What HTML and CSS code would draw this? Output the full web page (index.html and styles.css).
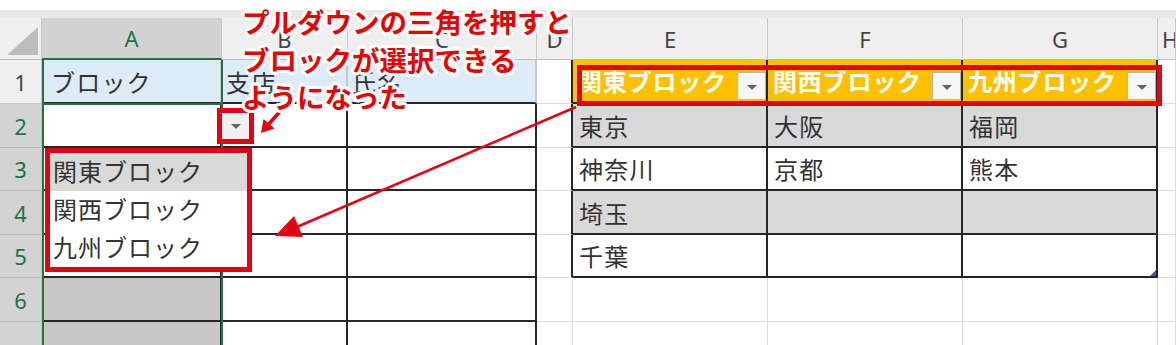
FILE: index.html
```html
<!DOCTYPE html>
<html lang="ja">
<head>
<meta charset="utf-8">
<title>Excel dropdown</title>
<link rel="stylesheet" href="styles.css">
</head>
<body>
<div class="app">
  <div class="topwhite"></div>
  <div class="topstrip"></div>
  <div class="sheet">
    <!-- header row -->
    <div class="corner"><svg width="42" height="42" viewBox="0 0 42 42"><polygon points="7,37 38,9 38,37" fill="#bdbdbd"/></svg></div>
    <div class="ch chsel">A</div>
    <div class="ch">B</div>
    <div class="ch">C</div>
    <div class="ch">D</div>
    <div class="ch">E</div>
    <div class="ch">F</div>
    <div class="ch">G</div>
    <div class="ch chlast">H</div>

    <!-- row 1 -->
    <div class="rh">1</div>
    <div class="c tb blue first">ブロック</div>
    <div class="c tb blue">支店</div>
    <div class="c tb blue">氏名</div>
    <div class="c dl"></div>
    <div class="c tt fh"><span class="fl">関東ブロック</span><span class="fbtn"></span></div>
    <div class="c tt fh"><span class="fl">関西ブロック</span><span class="fbtn"></span></div>
    <div class="c tt fh"><span class="fl">九州ブロック</span><span class="fbtn"></span></div>
    <div class="c"></div>

    <!-- row 2 -->
    <div class="rh rsel">2</div>
    <div class="c tb"></div>
    <div class="c tb"></div>
    <div class="c tb"></div>
    <div class="c dl"></div>
    <div class="c tt gray">東京</div>
    <div class="c tt gray">大阪</div>
    <div class="c tt gray">福岡</div>
    <div class="c"></div>

    <!-- row 3 -->
    <div class="rh rsel">3</div>
    <div class="c tb"></div>
    <div class="c tb"></div>
    <div class="c tb"></div>
    <div class="c dl"></div>
    <div class="c tt">神奈川</div>
    <div class="c tt">京都</div>
    <div class="c tt">熊本</div>
    <div class="c"></div>

    <!-- row 4 -->
    <div class="rh rsel">4</div>
    <div class="c tb"></div>
    <div class="c tb"></div>
    <div class="c tb"></div>
    <div class="c dl"></div>
    <div class="c tt gray">埼玉</div>
    <div class="c tt gray"></div>
    <div class="c tt gray"></div>
    <div class="c"></div>

    <!-- row 5 -->
    <div class="rh rsel">5</div>
    <div class="c tb"></div>
    <div class="c tb"></div>
    <div class="c tb"></div>
    <div class="c dl"></div>
    <div class="c tt">千葉</div>
    <div class="c tt"></div>
    <div class="c tt"><span class="handle"></span></div>
    <div class="c"></div>

    <!-- row 6 -->
    <div class="rh rsel">6</div>
    <div class="c tb selgray"></div>
    <div class="c tb"></div>
    <div class="c tb"></div>
    <div class="c"></div>
    <div class="c"></div>
    <div class="c"></div>
    <div class="c"></div>
    <div class="c"></div>

    <!-- row 7 -->
    <div class="rh rsel">7</div>
    <div class="c tb selgray"></div>
    <div class="c tb"></div>
    <div class="c tb"></div>
    <div class="c"></div>
    <div class="c"></div>
    <div class="c"></div>
    <div class="c"></div>
    <div class="c"></div>
  </div>

  <!-- selection border for column A -->
  <div class="selbox"></div>
  <div class="activeline"></div>

  <!-- dropdown button in A2 -->
  <div class="ddbtn"><span class="tri"></span></div>
  <div class="redbox-btn"></div>

  <!-- dropdown list -->
  <div class="ddlist">
    <div class="item hl">関東ブロック</div>
    <div class="item">関西ブロック</div>
    <div class="item">九州ブロック</div>
  </div>

  <!-- red box around filter headers -->
  <div class="redbox-hdr"></div>

  <!-- arrows -->
  <svg class="arrows" width="1176" height="345" viewBox="0 0 1176 345">
    <line x1="283" y1="108" x2="268" y2="125" stroke="#fff" stroke-width="7" stroke-linecap="round"/>
    <polygon points="261,133 274.5,128.5 263.5,119" fill="#fff" stroke="#fff" stroke-width="4" stroke-linejoin="round"/>
    <line x1="283" y1="108" x2="268" y2="125" stroke="#e60012" stroke-width="3.5" stroke-linecap="round"/>
    <polygon points="261,133 274.5,128.5 263.5,119" fill="#e60012"/>
    <line x1="576" y1="107" x2="298" y2="226.5" stroke="#e60012" stroke-width="2.5"/>
    <polygon points="275,236 303,237 294,216" fill="#e60012"/>
  </svg>

  <!-- annotation -->
  <div class="note">プルダウンの三角を押すと<br>ブロックが選択できる<br>ようになった</div>
</div>
</body>
</html>
```

FILE: styles.css
```css
html, body {
  margin: 0;
  padding: 0;
  background: #ffffff;
}

.app {
  position: relative;
  width: 1176px;
  height: 345px;
  overflow: hidden;
  font-family: "Noto Sans CJK JP", "Noto Sans", sans-serif;
}

.topwhite {
  height: 10px;
  background: #ffffff;
}

.topstrip {
  height: 8px;
  background: #e8e8e8;
}

.sheet {
  display: grid;
  grid-template-columns: 42px 180px 126px 189px 36px 195px 195px 195px 1fr;
  grid-template-rows: 42px 44px 44px 43px 44px 43px 44px 60px;
}

.corner {
  background: #efefef;
  border-right: 1px solid #c8c8c8;
  border-bottom: 1px solid #bdbdbd;
  box-sizing: border-box;
}

.corner svg {
  display: block;
}

.ch {
  background: #efefef;
  border-right: 1px solid #c8c8c8;
  border-bottom: 1px solid #bdbdbd;
  box-sizing: border-box;
  display: flex;
  align-items: center;
  justify-content: center;
  font-family: "Noto Sans", "Liberation Sans", sans-serif;
  font-size: 22px;
  color: #444444;
  overflow: hidden;
}

.chsel {
  background: #d2d2d2;
  color: #217346;
  border-bottom: 2px solid #217346;
}

.chlast {
  justify-content: flex-start;
  padding-left: 4px;
}

.rh {
  background: #efefef;
  border-right: 1px solid #c8c8c8;
  border-bottom: 1px solid #c8c8c8;
  box-sizing: border-box;
  display: flex;
  align-items: center;
  justify-content: center;
  font-family: "Noto Sans", "Liberation Sans", sans-serif;
  font-size: 22px;
  color: #444444;
}

.rsel {
  background: #d3d3d3;
  color: #217346;
  border-bottom-color: #bcbcbc;
}

.c {
  position: relative;
  box-sizing: border-box;
  border-right: 1px solid #dcdcdc;
  border-bottom: 1px solid #dcdcdc;
  display: flex;
  align-items: center;
  padding-left: 6px;
  font-size: 24px;
  letter-spacing: 1.2px;
  color: #333333;
  white-space: nowrap;
  overflow: hidden;
}

.tb {
  border-right: 2px solid #262626;
  border-bottom: 2px solid #262626;
  padding-left: 4px;
}

.tt {
  border-right: 2px solid #262626;
  border-bottom: 2px solid #262626;
}

.dl {
  border-right: 2px solid #262626;
}

.blue {
  background: #ddebf7;
  border-right-color: #c8c8c8;
}

.first {
  padding-left: 9px;
}

.gray {
  background: #d9d9d9;
}

.selgray {
  background: #c8c8c8;
}

.fh {
  background: #ffc000;
  color: #ffffff;
  font-weight: bold;
  letter-spacing: 0.8px;
  justify-content: space-between;
  align-items: flex-end;
  padding-left: 5px;
  padding-bottom: 2px;
  padding-right: 0;
}

.fl {
  align-self: center;
}

.fbtn {
  position: relative;
  width: 29px;
  height: 28px;
  box-sizing: border-box;
  background: #f6f6f6;
  border: 1px solid #b4b4b4;
  flex: none;
}

.fbtn::after {
  content: "";
  position: absolute;
  left: 9px;
  top: 12px;
  border-left: 5px solid transparent;
  border-right: 5px solid transparent;
  border-top: 5px solid #666666;
}

.handle {
  position: absolute;
  right: 0;
  bottom: 0;
  width: 0;
  height: 0;
  border-left: 6px solid transparent;
  border-bottom: 6px solid #3d5aa8;
}

/* overlays */
.selbox {
  position: absolute;
  left: 42px;
  top: 60px;
  width: 181px;
  height: 300px;
  box-sizing: border-box;
  border-left: 2px solid #217346;
  border-right: 2px solid #217346;
}

.activeline {
  position: absolute;
  left: 42px;
  top: 103px;
  width: 181px;
  height: 2px;
  background: #217346;
}

.ddbtn {
  position: absolute;
  left: 222px;
  top: 113px;
  width: 28px;
  height: 26px;
  background: #f0f0f0;
}

.tri {
  position: absolute;
  left: 9px;
  top: 11px;
  border-left: 5px solid transparent;
  border-right: 5px solid transparent;
  border-top: 5px solid #666666;
}

.redbox-btn {
  position: absolute;
  left: 217px;
  top: 108px;
  width: 37px;
  height: 36px;
  box-sizing: border-box;
  border: 5px solid #e60012;
}

.ddlist {
  position: absolute;
  left: 45px;
  top: 148px;
  width: 207px;
  height: 124px;
  box-sizing: border-box;
  border: 5px solid #e60012;
  background: #ffffff;
  display: flex;
  flex-direction: column;
}

.item {
  height: 38px;
  display: flex;
  align-items: center;
  padding-left: 3px;
  padding-bottom: 3px;
  box-sizing: border-box;
  font-size: 24px;
  letter-spacing: 1px;
  color: #333333;
  white-space: nowrap;
}

.hl {
  background: #d9d9d9;
}

.redbox-hdr {
  position: absolute;
  left: 577px;
  top: 65px;
  width: 585px;
  height: 41px;
  box-sizing: border-box;
  border: 5px solid #e60012;
}

.arrows {
  position: absolute;
  left: 0;
  top: 0;
  pointer-events: none;
}

.note {
  position: absolute;
  left: 242px;
  top: 3px;
  font-family: "Noto Sans CJK JP", sans-serif;
  font-weight: bold;
  font-size: 27.5px;
  line-height: 37.5px;
  color: #ec0000;
  white-space: nowrap;
  text-shadow:
    2px 0 #fff, -2px 0 #fff, 0 2px #fff, 0 -2px #fff,
    2px 2px #fff, -2px 2px #fff, 2px -2px #fff, -2px -2px #fff,
    3px 0 #fff, -3px 0 #fff, 0 3px #fff, 0 -3px #fff,
    3px 1px #fff, -3px 1px #fff, 1px 3px #fff, -1px -3px #fff,
    3px -1px #fff, -3px -1px #fff, -1px 3px #fff, 1px -3px #fff;
}
```
